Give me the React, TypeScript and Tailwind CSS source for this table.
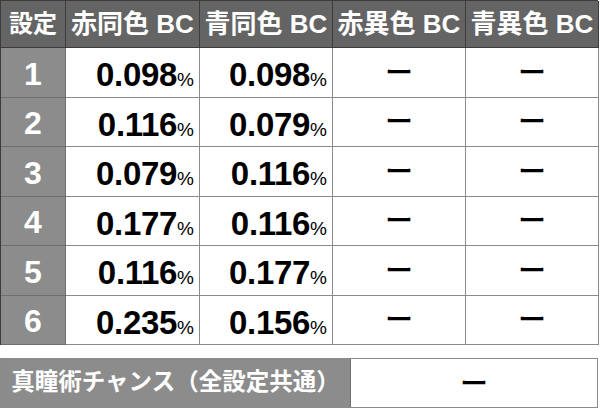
const rows = [
  { n: "1", red: "0.098", blue: "0.098" },
  { n: "2", red: "0.116", blue: "0.079" },
  { n: "3", red: "0.079", blue: "0.116" },
  { n: "4", red: "0.177", blue: "0.116" },
  { n: "5", red: "0.116", blue: "0.177" },
  { n: "6", red: "0.235", blue: "0.156" },
];

const heads = ["赤同色 BC", "青同色 BC", "赤異色 BC", "青異色 BC"];

function Pct({ v }: { v: string }) {
  return (
    <span className="whitespace-nowrap leading-none">
      <span className="text-[33px] font-bold tracking-[-0.3px]">{v}</span>
      <span className="text-[19px] font-normal">%</span>
    </span>
  );
}

function Dash() {
  return <span className="text-[28px] font-medium leading-none pt-[3px]">ー</span>;
}

export default function App() {
  return (
    <div className="w-[600px] h-[409px] bg-white font-['Liberation_Sans','Noto_Sans_CJK_JP',sans-serif] text-black">
      {/* main table */}
      <div className="grid grid-cols-[65px_134px_133px_133px_133px] w-[598px] border-l border-t border-[#3c3c3c]">
        <div className="h-[47px] bg-[#646464] border-r border-b border-[#3c3c3c] flex items-center justify-center text-white text-[24px] font-bold">
          設定
        </div>
        {heads.map((h) => (
          <div
            key={h}
            className="h-[47px] bg-[#646464] border-r border-b border-[#3c3c3c] flex items-center justify-center text-white text-[26px] font-bold whitespace-nowrap"
          >
            {h}
          </div>
        ))}

        {rows.map((r) => (
          <div key={r.n} className="contents">
            <div className="h-[49.5px] bg-[#8c8c8c] border-r border-b border-[#6e6e6e] flex items-center justify-center pt-[3px] text-white text-[32px] font-bold">
              {r.n}
            </div>
            <div className="h-[49.5px] border-r border-b border-[#8a8a8a] flex items-center justify-end pr-[5px] pt-[5px]">
              <Pct v={r.red} />
            </div>
            <div className="h-[49.5px] border-r border-b border-[#8a8a8a] flex items-center justify-end pr-[5px] pt-[5px]">
              <Pct v={r.blue} />
            </div>
            <div className="h-[49.5px] border-r border-b border-[#8a8a8a] flex items-center justify-center">
              <Dash />
            </div>
            <div className="h-[49.5px] border-r border-b border-[#8a8a8a] flex items-center justify-center">
              <Dash />
            </div>
          </div>
        ))}
      </div>

      {/* chance row */}
      <div className="mt-[13px] flex w-[598px] h-[50px] border border-[#8a8a8a]">
        <div className="w-[350px] bg-[#8c8c8c] border-r border-[#6e6e6e] flex items-center justify-center text-white text-[23.5px] font-bold whitespace-nowrap">
          真瞳術チャンス（全設定共通）
        </div>
        <div className="flex-1 flex items-center justify-center">
          <Dash />
        </div>
      </div>
    </div>
  );
}
